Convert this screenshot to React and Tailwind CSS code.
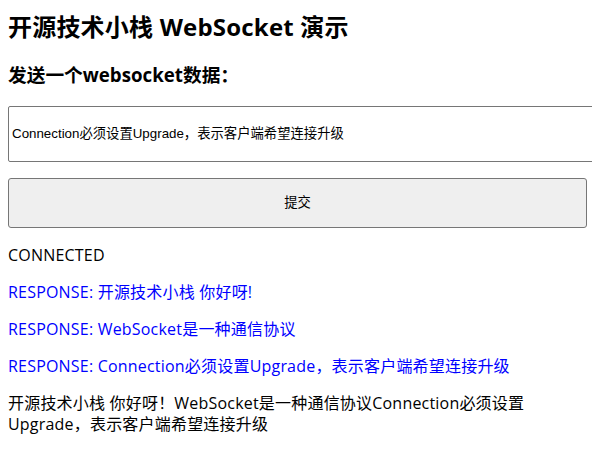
export default function App() {
  return (
    <div className="bg-white text-black px-2 pb-4 w-[592px] h-[460px] overflow-hidden font-['Open_Sans','Noto_Sans_CJK_SC',sans-serif]">
      <h2 className="mt-[11px] text-[24px] leading-[32px] font-bold tracking-[0.2px]">开源技术小栈 WebSocket 演示</h2>
      <h3 className="mt-[19px] text-[18.72px] leading-[26px] font-bold">发送一个websocket数据：</h3>
      <div className="mt-[18px] w-[600px] h-[56px] border border-[#767676] rounded-[2px] flex items-center px-[3px] font-['Liberation_Sans','Noto_Sans_CJK_SC',sans-serif] text-[13.33px] text-black">
        Connection必须设置Upgrade，表示客户端希望连接升级
      </div>
      <button className="mt-[16px] w-[579px] h-[50px] border border-[#767676] rounded-[3px] bg-[#efefef] flex items-center justify-center font-['Liberation_Sans','Noto_Sans_CJK_SC',sans-serif] text-[13.33px] text-black">
        提交
      </button>
      <div className="tracking-[0.2px]">
        <p className="mt-[17px] text-[16px] leading-[21px]">CONNECTED</p>
        <p className="mt-[16px] text-[16px] leading-[21px] text-[#0000ff]">RESPONSE: 开源技术小栈 你好呀!</p>
        <p className="mt-[16px] text-[16px] leading-[21px] text-[#0000ff]">RESPONSE: WebSocket是一种通信协议</p>
        <p className="mt-[16px] text-[16px] leading-[21px] text-[#0000ff]">RESPONSE: Connection必须设置Upgrade，表示客户端希望连接升级</p>
        <p className="mt-[16px] text-[16px] leading-[21px] w-[545px]">开源技术小栈 你好呀！WebSocket是一种通信协议Connection必须设置Upgrade，表示客户端希望连接升级</p>
      </div>
    </div>
  );
}
